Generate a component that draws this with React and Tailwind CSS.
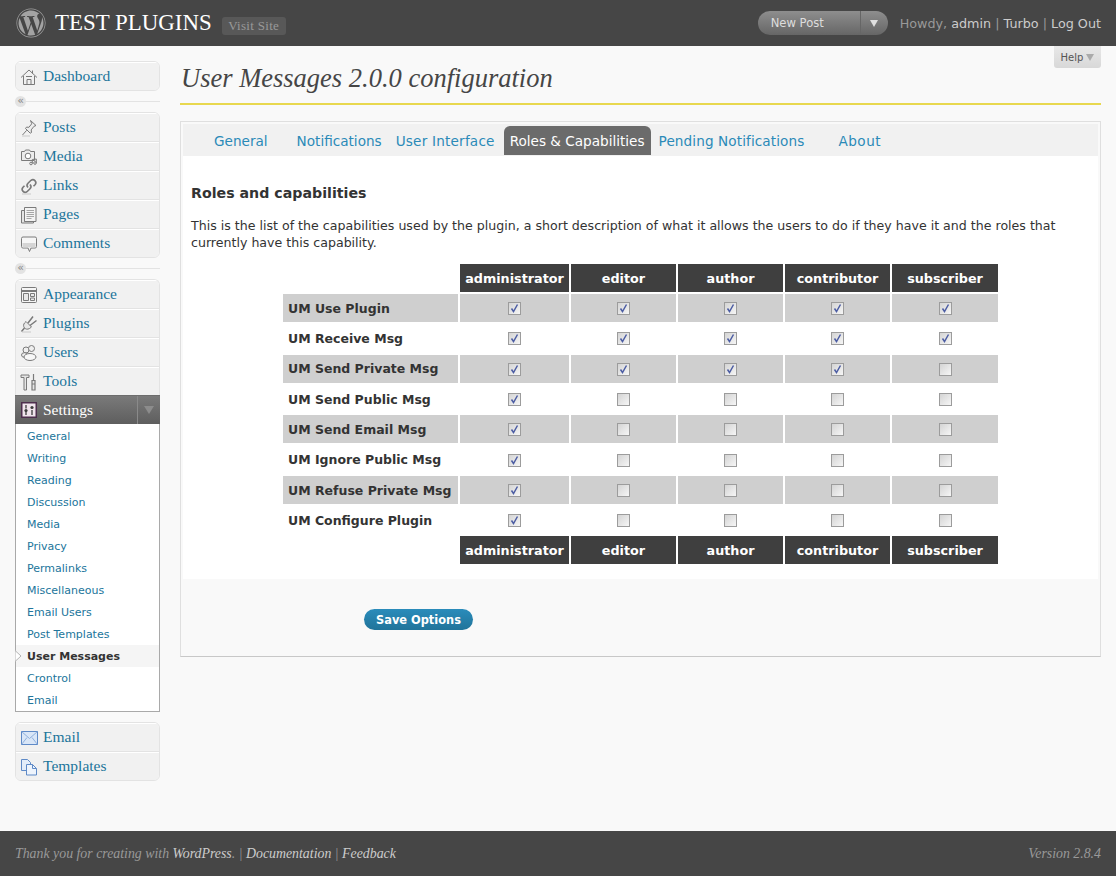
import React from "react";
import { FaWordpress } from "react-icons/fa";

const serif = "font-['Liberation_Serif',serif]";

const I = ({ children }) => (
  <svg width="18" height="18" viewBox="0 0 18 18" fill="none" stroke="#7a7a7a" strokeWidth="1" className="shrink-0">
    {children}
  </svg>
);

const icons = {
  home: (
    <I>
      <path d="M1 9.500 9 2l8 7.500M3.500 8v8.500h11V8M7 16.500v-5h4v5M12.500 2.500v3" fill="#f1f1f1" />
      <path d="M6 8.500h6" />
    </I>
  ),
  pin: (
    <I>
      <path d="M10.500 1.500 16 6.500l-2 .8-2.800 3.600.3 2.600-1.300.7L5.500 9.500l1-1.400 2.400.2 2.800-3.500z" fill="#ececec" />
      <path d="m6.700 11.300-4.200 4.700" />
      <path d="M2 17h8" stroke="#c9c9c9" />
    </I>
  ),
  media: (
    <I>
      <path d="M1.500 3.500h3l1-1.500h4l1 1.500h4v9h-13z" fill="#ececec" />
      <circle cx="8" cy="8" r="2.800" fill="#fff" />
      <circle cx="11" cy="15.500" r="1.300" />
      <circle cx="15" cy="15" r="1.300" />
      <path d="M12.300 15.500v-4l4-.5v4" />
    </I>
  ),
  link: (
    <I>
      <path d="M8 10.500a3 3 0 0 1 0-4.200l3-3a3 3 0 0 1 4.200 4.200l-1.700 1.700" strokeWidth="1.600" />
      <path d="M10 7.500a3 3 0 0 1 0 4.200l-3 3A3 3 0 0 1 2.800 10.500l1.700-1.700" strokeWidth="1.600" />
      <path d="M2 17h9" stroke="#c9c9c9" />
    </I>
  ),
  pages: (
    <I>
      <path d="M1.500 4.500h3v11h9v1.500h-12z" fill="#e4e4e4" />
      <path d="M4.500 1.500h11.500v14H4.500z" fill="#f3f3f3" />
      <path d="M6.500 4.500h7.500M6.500 6.500h7.500M6.500 8.500h7.500M6.500 10.500h7.500M6.500 12.500h5" stroke="#a5a5a5" />
    </I>
  ),
  comments: (
    <I>
      <path d="M3 2h12a1.500 1.500 0 0 1 1.500 1.500v8A1.500 1.500 0 0 1 15 13h-4l-1.500 3.500L8 13H3a1.500 1.500 0 0 1-1.500-1.500v-8A1.500 1.500 0 0 1 3 2z" fill="#f6f6f6" />
      <path d="M2.500 8h13v4.500h-13z" fill="#d5d5d5" stroke="none" />
    </I>
  ),
  appearance: (
    <I>
      <rect x="1.500" y="1.500" width="15" height="15" rx="1" fill="#f6f6f6" />
      <path d="M1.500 5h15" strokeWidth="2" />
      <path d="M3.500 7.500h5v7h-5zM10.500 7.500h4v3h-4zM10.500 12h4v2.500h-4z" fill="#e8e8e8" />
    </I>
  ),
  plugins: (
    <I>
      <path d="M6 6.500 11.500 12l-2 1.500c-2 1.300-4.200.6-5.200-.8-1-1.400-1-3.400.3-4.800z" fill="#e8e8e8" />
      <path d="M8 8 13 1.500M10 10.500 16.500 5.500M4.500 13 1.500 16.500" strokeWidth="1.500" />
      <path d="M2 17h9" stroke="#c9c9c9" />
    </I>
  ),
  users: (
    <I>
      <circle cx="6" cy="6" r="3" fill="#eee" />
      <circle cx="11.500" cy="4.500" r="3" fill="#eee" />
      <ellipse cx="4.500" cy="11" rx="3" ry="2.300" fill="#eee" />
      <ellipse cx="10" cy="13" rx="6" ry="3.500" fill="#f7f7f7" />
    </I>
  ),
  tools: (
    <I>
      <path d="M1 2h8v2.500H6.500V17H4V4.500H1z" fill="#e6e6e6" />
      <path d="M13.500 1v6M12 7.500h3V11h-3zM12 11h3v6h-3z" fill="#e6e6e6" strokeWidth="1.200" />
    </I>
  ),
  settings: (
    <svg width="16" height="16" viewBox="0 0 16 16" className="shrink-0">
      <rect x=".75" y=".75" width="14.500" height="14.500" fill="#efe4ec" stroke="#4d2f4d" strokeWidth="1.500" />
      <path d="M5 3v3.500M11 8v5" stroke="#3a3a3a" strokeWidth="1.300" />
      <circle cx="5" cy="8.500" r="1.600" fill="#3a3a3a" />
      <path d="M5 8.500V13" stroke="#3a3a3a" strokeWidth="1.300" />
      <circle cx="11" cy="5.500" r="1.600" fill="#3a3a3a" />
    </svg>
  ),
  email: (
    <svg width="17" height="14" viewBox="0 0 17 14" className="shrink-0">
      <rect x=".5" y=".5" width="16" height="13" fill="#d9e6f7" stroke="#5f8ac7" />
      <path d="m.5.500 8 7 8-7M.5 13.500l5.500-7M16.500 13.500l-5.500-7" fill="none" stroke="#8fb0dd" />
    </svg>
  ),
  templates: (
    <svg width="18" height="18" viewBox="0 0 18 18" className="shrink-0">
      <path d="M1.500 1.500h6l3 3v8h-9z" fill="#e3edfa" stroke="#5f8ac7" />
      <path d="M6.500 6.500h6l4 4v6.500h-10z" fill="#eef4fc" stroke="#5f8ac7" />
      <path d="M12.500 6.500v4h4" fill="none" stroke="#5f8ac7" />
    </svg>
  ),
};

const MenuItem = ({ icon, label, short }) => (
  <a
    className={`flex items-center gap-[4px] pl-[3px] bg-[#f1f1f1] border-t border-t-white ${short ? "h-[28px]" : "h-[29px] border-b border-b-[#e3e3e3]"}`}
  >
    <span className="flex w-[20px] justify-center">{icons[icon]}</span>
    <span className={`${serif} pb-[2px] text-[15.5px] text-[#21759b]`}>{label}</span>
  </a>
);

const Group = ({ children }) => (
  <div className="overflow-hidden rounded-[6px] border border-[#e3e3e3]">{children}</div>
);

const Sep = () => (
  <div className="relative my-[5px] flex h-[11px] items-center">
    <div className="h-px w-full bg-[#e3e3e3]" />
    <span className="absolute left-0 top-0 flex h-[11px] w-[11px] items-center justify-center rounded-full bg-[#e3e3e3] pb-[2px] text-[11px] leading-none text-[#888]">
      «
    </span>
  </div>
);

const sub = ["General", "Writing", "Reading", "Discussion", "Media", "Privacy", "Permalinks", "Miscellaneous", "Email Users", "Post Templates", "User Messages", "Crontrol", "Email"];

const Sidebar = () => (
  <aside className="w-[145px] shrink-0 pt-[15px]">
    <Group>
      <MenuItem icon="home" label="Dashboard" short />
    </Group>
    <Sep />
    <Group>
      <MenuItem icon="pin" label="Posts" />
      <MenuItem icon="media" label="Media" />
      <MenuItem icon="link" label="Links" />
      <MenuItem icon="pages" label="Pages" />
      <MenuItem icon="comments" label="Comments" short />
    </Group>
    <Sep />
    <div className="overflow-hidden rounded-t-[6px] border-x border-t border-[#e3e3e3]">
      <MenuItem icon="appearance" label="Appearance" />
      <MenuItem icon="plugins" label="Plugins" />
      <MenuItem icon="users" label="Users" />
      <div className="-mb-px">
        <MenuItem icon="tools" label="Tools" />
      </div>
    </div>
    <div className="relative flex h-[29px] items-center bg-gradient-to-b from-[#7a7a7a] to-[#5e5e5e] border-t border-[#6d6d6d] pl-[4px]">
      <span className="flex w-[20px] justify-center">{icons.settings}</span>
      <span className={`${serif} ml-[4px] flex-1 text-[15.5px] text-white`}>Settings</span>
      <span className="flex h-full w-[23px] items-center justify-center border-l border-[#8a8a8a]">
        <span className="h-0 w-0 border-x-[5px] border-t-[8px] border-x-transparent border-t-[#8c8c8c]" />
      </span>
    </div>
    <ul className="border-x border-b border-[#a9a9a9] bg-white pt-px">
      {sub.map((s) => {
        const on = s === "User Messages";
        return (
          <li
            key={s}
            className={`relative flex h-[22px] items-center pl-[11px] pt-[2px] text-[11px] ${on ? "bg-[#f5f5f5] font-bold text-[#333]" : "text-[#21759b]"}`}
          >
            {on && (
              <svg width="7" height="12" viewBox="0 0 7 12" className="absolute -left-px top-[5px]">
                <path d="M0 .5 6 6 0 11.500z" fill="#fff" stroke="#b5b5b5" />
              </svg>
            )}
            {s}
          </li>
        );
      })}
    </ul>
    <div className="mt-[10px]">
      <Group>
        <MenuItem icon="email" label="Email" />
        <MenuItem icon="templates" label="Templates" short />
      </Group>
    </div>
  </aside>
);

const roles = ["administrator", "editor", "author", "contributor", "subscriber"];
const rows = [
  ["UM Use Plugin", 5],
  ["UM Receive Msg", 5],
  ["UM Send Private Msg", 4],
  ["UM Send Public Msg", 1],
  ["UM Send Email Msg", 1],
  ["UM Ignore Public Msg", 1],
  ["UM Refuse Private Msg", 1],
  ["UM Configure Plugin", 1],
];

const Check = ({ on }) => (
  <span className="inline-flex h-[13px] w-[13px] items-center justify-center border border-[#9c9c9c] bg-gradient-to-br from-[#d4d4d4] to-[#f6f6f6] align-middle">
    {on && (
      <svg width="9" height="9" viewBox="0 0 9 9" fill="none">
        <path d="M1.500 4.500 3.500 7.500 7.500 .5" stroke="#4c5da3" strokeWidth="1.500" />
      </svg>
    )}
  </span>
);

const HeadRow = () => (
  <tr>
    <th />
    {roles.map((r) => (
      <th key={r} className="h-[28px] bg-[#3f3f3f] p-0 pt-px text-center text-[12.75px] font-bold text-white">
        {r}
      </th>
    ))}
  </tr>
);

const tabs = [
  ["General", "ml-[31px]"],
  ["Notifications", "ml-[29px]"],
  ["User Interface", "ml-[14px] tracking-[.2px]"],
  ["Roles & Capabilities", "ml-[9px]"],
  ["Pending Notifications", "ml-[8px] tracking-[.1px]"],
  ["About", "ml-[34px] tracking-[.5px]"],
];

const Content = () => (
  <main className="relative ml-[20px] w-[921px] shrink-0">
    <a className="absolute right-0 top-0 flex h-[22px] w-[47px] items-center justify-center gap-[3px] rounded-b-[3px] bg-gradient-to-b from-[#e8e8e8] to-[#d8d8d8] text-[10px] text-[#555]">
      Help
      <span className="h-0 w-0 border-x-[4px] border-t-[7px] border-x-transparent border-t-[#aaa]" />
    </a>
    <h2 className={`${serif} flex h-[59px] items-end border-b-2 border-[#e8d84f] pb-[10px] pl-px text-[26.5px] italic leading-[30px] text-[#464646]`}>
      User Messages 2.0.0 configuration
    </h2>
    <div className="mt-[16px] h-[536px] border border-[#dfdfdf] border-b-[#c8c8c8] p-[2px] pb-0">
      <div className="flex h-[32px] items-end bg-[#f1f1f1] pb-px">
        {tabs.map(([t, m]) => (
          <a
            key={t}
            className={`${m} flex h-[29px] items-center pt-[2px] text-[13.6px] ${t.startsWith("Roles") ? "rounded-t-[6px] bg-[#6b6b6b] px-[6px] text-white" : "text-[#2a8ab8]"}`}
          >
            {t}
          </a>
        ))}
      </div>
      <div className="h-[423px] bg-white px-[8px] pt-[27px]">
        <h3 className="text-[14.2px] font-bold leading-[20px] text-[#333]">Roles and capabilities</h3>
        <p className="mt-[14px] text-[12.6px] leading-[17px] text-[#333]">
          This is the list of the capabilities used by the plugin, a short description of what it allows the users to do if they have it and the roles that currently have this capability.
        </p>
        <table className="mx-auto mt-[11px] w-[719px] table-fixed border-separate border-spacing-[2px]">
          <colgroup>
            <col className="w-[175px]" />
            <col className="w-[109px]" />
            <col className="w-[105px]" />
            <col className="w-[105px]" />
            <col className="w-[105px]" />
            <col className="w-[106px]" />
          </colgroup>
          <thead>
            <HeadRow />
          </thead>
          <tbody>
            {rows.map(([name, n], i) => (
              <tr key={name}>
                <td className={`h-[28.3px] p-0 pl-[5px] pt-[2px] text-[12.5px] font-bold text-[#333] ${i % 2 === 0 ? "bg-[#cfcfcf]" : ""}`}>{name}</td>
                {roles.map((r, j) => (
                  <td key={r} className={`p-0 text-center ${i % 2 === 0 ? "bg-[#cfcfcf]" : ""}`}>
                    <Check on={j < n} />
                  </td>
                ))}
              </tr>
            ))}
          </tbody>
          <tfoot>
            <HeadRow />
          </tfoot>
        </table>
      </div>
      <div className="pl-[181px] pt-[28px]">
        <button className="h-[21px] w-[109px] rounded-full bg-gradient-to-b from-[#2a8cbb] to-[#21749a] pt-[2px] text-[11.4px] font-bold text-white">
          Save Options
        </button>
      </div>
    </div>
  </main>
);

export default function App() {
  return (
    <div className="flex min-h-[876px] flex-col bg-[#f9f9f9] font-['DejaVu_Sans',sans-serif]">
      <header className="flex h-[46px] shrink-0 items-center bg-[#464646] pl-[16px] pr-[15px]">
        <FaWordpress size={30} color="#a3a3a3" />
        <h1 className={`${serif} ml-[9px] text-[22.9px] text-white`}>TEST PLUGINS</h1>
        <a className={`${serif} ml-[10px] mt-[6px] flex h-[18px] w-[64px] items-center justify-center rounded-[3px] bg-[#585858] text-[13px] tracking-[.3px] text-[#999]`}>
          Visit Site
        </a>
        <div className="ml-auto flex h-[24px] w-[130px] items-center rounded-full bg-gradient-to-b from-[#8e8e8e] to-[#666] text-[11.6px] text-[#ddd]">
          <span className="flex-1 pl-[13px] pt-px">New Post</span>
          <span className="flex h-full w-[28px] items-center justify-center border-l border-[#666]">
            <span className="h-0 w-0 border-x-[4px] border-t-[7px] border-x-transparent border-t-[#e0e0e0]" />
          </span>
        </div>
        <p className="ml-[12px] pt-px text-[12.75px] text-[#999]">
          Howdy, <span className="text-[#ccc]">admin</span> | <span className="text-[#ccc]">Turbo</span> | <span className="text-[#ccc]">Log Out</span>
        </p>
      </header>
      <div className="flex flex-1 pl-[15px]">
        <Sidebar />
        <Content />
      </div>
      <footer className={`${serif} flex h-[45px] shrink-0 items-center justify-between bg-[#464646] px-[15px] pt-px text-[13.85px] italic text-[#999]`}>
        <p>
          Thank you for creating with <span className="text-[#ccc]">WordPress</span>. | <span className="text-[#ccc]">Documentation</span> | <span className="text-[#ccc]">Feedback</span>
        </p>
        <p>Version 2.8.4</p>
      </footer>
    </div>
  );
}
